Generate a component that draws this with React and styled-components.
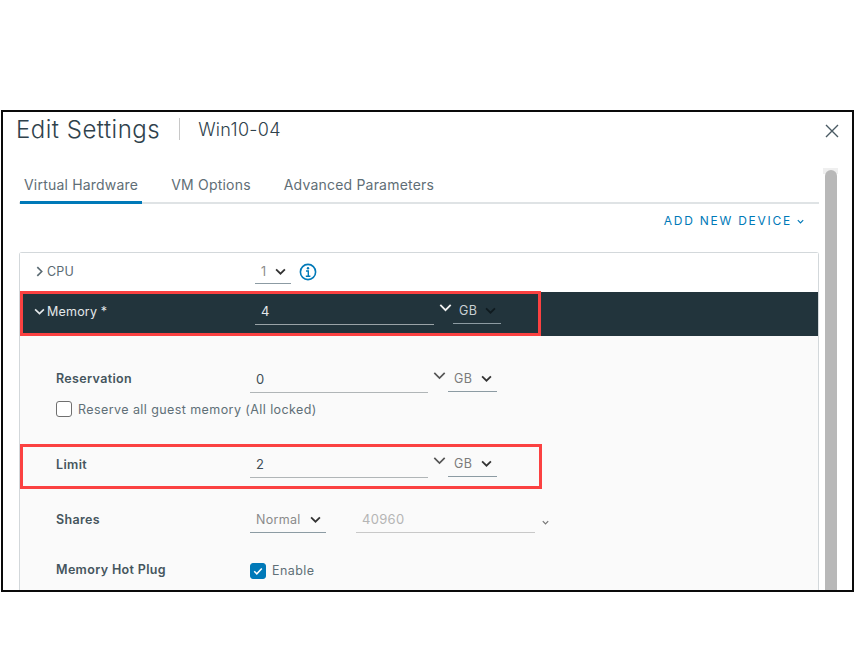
import React from "react";
import styled, { createGlobalStyle } from "styled-components";

const Global = createGlobalStyle`
  html, body { margin: 0; padding: 0; background: #fff; }
  body { font-family: Inter, "Liberation Sans", sans-serif; color: #565656; }
`;

const Page = styled.div`
  width: 854px;
  height: 666px;
  padding: 110px 0 0 1px;
  box-sizing: border-box;
`;
const Dialog = styled.div`
  width: 853px;
  height: 482px;
  box-sizing: border-box;
  border: 2px solid #0a0a0a;
  background: #fff;
  overflow: hidden;
  display: flex;
  flex-direction: column;
  position: relative;
`;
const Header = styled.header`
  height: 56px;
  flex: none;
  display: flex;
  align-items: flex-start;
  padding: 4px 12px 0 13px;
  box-sizing: border-box;
`;
const Title = styled.h1`
  margin: 0;
  font-size: 24px;
  line-height: 28px;
  font-weight: 300;
  color: #2f424c;
  letter-spacing: 0.5px;
`;
const Divider = styled.span`
  width: 1px;
  height: 22px;
  background: #c8c8c8;
  margin: 2px 18px 0 19px;
`;
const SubTitle = styled.div`
  font-size: 18px;
  line-height: 28px;
  font-weight: 300;
  color: #2f424c;
  letter-spacing: 0.3px;
  flex: 1;
`;
const Close = styled.svg`
  width: 14px;
  height: 14px;
  margin-top: 8px;
  margin-right: 1px;
  stroke: #4a5a63;
  stroke-width: 1.4;
  fill: none;
`;
const Main = styled.div`
  flex: 1;
  display: flex;
  min-height: 0;
`;
const Content = styled.div`
  width: 800px;
  margin-left: 16px;
  display: flex;
  flex-direction: column;
`;
const Tabs = styled.nav`
  height: 36px;
  flex: none;
  box-sizing: border-box;
  display: flex;
  border-bottom: 2px solid #dfe3e5;
  padding-left: 1px;
`;
const Tab = styled.div`
  padding: 7px 4px 0 4px;
  margin-right: 25px;
  margin-bottom: -2px;
  font-size: 14px;
  font-weight: 400;
  letter-spacing: 0.2px;
  line-height: 20px;
  color: #5f6e76;
  border-bottom: 3px solid ${(p) => (p.$active ? "#0079b8" : "transparent")};
  box-sizing: border-box;
  height: 36px;
`;
const Actions = styled.div`
  height: 48px;
  flex: none;
  display: flex;
  justify-content: flex-end;
  align-items: flex-start;
  padding: 10px 14px 0 0;
  box-sizing: border-box;
`;
const AddButton = styled.div`
  display: flex;
  align-items: center;
  gap: 4px;
  font-size: 12px;
  line-height: 14px;
  font-weight: 400;
  letter-spacing: 1.75px;
  color: #0079b8;
`;
const Card = styled.section`
  flex: 1;
  border: 1px solid #d3d8db;
  border-bottom: 0;
  border-radius: 3px 3px 0 0;
  display: flex;
  flex-direction: column;
  position: relative;
  background: #fafafa;
`;
const HeadRow = styled.div`
  flex: none;
  display: grid;
  grid-template-columns: 235px auto 1fr;
  align-items: center;
  box-sizing: border-box;
  height: ${(p) => p.$h}px;
  padding-bottom: ${(p) => p.$pb || 0}px;
  background: ${(p) => (p.$dark ? "#22343c" : "#fff")};
  color: ${(p) => (p.$dark ? "#e4e8ea" : "#5a6a72")};
`;
const RowTitle = styled.div`
  display: flex;
  align-items: center;
  padding-left: 14px;
  gap: 2px;
  font-size: 12.5px;
  letter-spacing: 0.2px;
  line-height: 16px;
`;
const Chevron = styled.svg`
  width: ${(p) => p.$s || 10}px;
  height: ${(p) => p.$s || 10}px;
  flex: none;
  fill: none;
  stroke: ${(p) => p.$c || "#4a5a63"};
  stroke-width: ${(p) => p.$w || 1.5};
`;
const Line = ({ s, c, w, right, small }) => (
  <Chevron $s={s} $c={c} $w={w} viewBox="0 0 10 10">
    <path d={right ? "M3 1l4 4-4 4" : small ? "M2 3.5l3 3 3-3" : "M1 3l4 4 4-4"} />
  </Chevron>
);
const InlineControls = styled.div`
  display: flex;
  align-items: center;
  gap: 8px;
`;
const Select = styled.div`
  display: flex;
  align-items: center;
  justify-content: space-between;
  box-sizing: border-box;
  width: ${(p) => p.$w}px;
  height: ${(p) => p.$h || 26}px;
  padding: 0 5px 0 ${(p) => p.$pl || 6}px;
  border-bottom: 1px solid ${(p) => p.$line || "#8c9ba3"};
  font-size: 12.5px;
  letter-spacing: 0.3px;
  color: ${(p) => p.$color || "#7b7b7b"};
  margin-bottom: ${(p) => p.$mb || 0}px;
`;
const Input = styled.div`
  display: flex;
  align-items: center;
  box-sizing: border-box;
  width: ${(p) => p.$w}px;
  height: 26px;
  padding-left: 6px;
  margin-left: ${(p) => p.$ml || 0}px;
  border-bottom: 1px solid ${(p) => p.$line || "#b0b5b7"};
  font-size: 13px;
  letter-spacing: 0.3px;
  color: ${(p) => p.$color || "#3f4f57"};
`;
const Spin = styled.div`
  width: ${(p) => p.$w || 20}px;
  height: 26px;
  display: flex;
  justify-content: flex-start;
  padding: ${(p) => p.$pt ?? 2}px 0 0 ${(p) => p.$pl ?? 5}px;
  box-sizing: border-box;
`;
const FieldGroup = styled.div`
  display: flex;
  align-items: flex-end;
`;
const Panel = styled.div`
  flex: 1;
  padding: 30px 0 0 36px;
  position: relative;
`;
const FormRow = styled.div`
  display: grid;
  grid-template-columns: 194px 1fr;
  align-items: center;
  min-height: ${(p) => p.$h || 27}px;
  margin-top: ${(p) => p.$mt || 0}px;
`;
const Label = styled.div`
  font-size: 12.5px;
  font-weight: 600;
  letter-spacing: 0.35px;
  color: #45555d;
  padding-bottom: ${(p) => p.$pb || 0}px;
`;
const CheckLine = styled.div`
  display: flex;
  align-items: center;
  gap: 6px;
  height: 16px;
  margin-top: ${(p) => p.$mt || 0}px;
  font-size: 12.5px;
  letter-spacing: 0.42px;
  color: #5f6f77;
`;
const Box = styled.span`
  width: 16px;
  height: 16px;
  box-sizing: border-box;
  border-radius: 3px;
  flex: none;
  border: 1px solid ${(p) => (p.$on ? "#0079b8" : "#6f6f6f")};
  background: ${(p) => (p.$on ? "#0079b8" : "#fff")};
  display: flex;
  align-items: center;
  justify-content: center;
`;
const Highlight = styled.div`
  position: absolute;
  box-sizing: border-box;
  border: 3.5px solid #fb4141;
  pointer-events: none;
`;
const Scrollbar = styled.aside`
  width: 15px;
  margin-left: 4px;
  background: linear-gradient(#efefef 6px, #fff 6px);
  padding: 2px 1px 0 2px;
  box-sizing: border-box;
`;
const Thumb = styled.div`
  height: 100%;
  background: #b8b8b8;
  border-radius: 6px 6px 0 0;
`;

const UnitSelect = ({ dark }) => (
  <Select $w={dark ? 48 : 49} $h={25} $mb={1} $pl={6} $color={dark ? "#c9d0d3" : "#7b7b7b"} $line={dark ? "#8d9ba2" : "#8c9ba3"}>
    GB
    <Line s={11} c={dark ? "#0f1a1f" : "#333"} w={1.6} />
  </Select>
);

export default function App() {
  return (
    <Page>
      <Global />
      <Dialog>
        <Header>
          <Title>Edit Settings</Title>
          <Divider />
          <SubTitle>Win10-04</SubTitle>
          <Close viewBox="0 0 14 14">
            <path d="M1 1l12 12M13 1L1 13" />
          </Close>
        </Header>
        <Main>
          <Content>
            <Tabs>
              <Tab $active>Virtual Hardware</Tab>
              <Tab>VM Options</Tab>
              <Tab>Advanced Parameters</Tab>
            </Tabs>
            <Actions>
              <AddButton>
                ADD NEW DEVICE
                <Line s={9} c="#0079b8" w={1.3} small />
              </AddButton>
            </Actions>
            <Card>
              <HeadRow $h={39} $pb={2}>
                <RowTitle>
                  <Line s={11} c="#5a6a72" right />
                  CPU
                </RowTitle>
                <InlineControls>
                  <Select $w={36} $h={24} $pl={6} $color="#8a8a8a" $line="#8c9ba3">
                    1
                    <Line s={11} c="#333" w={1.6} />
                  </Select>
                  <svg width="18" height="18" viewBox="0 0 18 18" fill="none">
                    <circle cx="9" cy="9" r="7.6" stroke="#0079b8" strokeWidth="1.6" />
                    <circle cx="9" cy="5.2" r="1.2" fill="#0079b8" />
                    <path d="M7 8h2.3v5M6.8 13.2h4.6" stroke="#0079b8" strokeWidth="1.4" />
                  </svg>
                </InlineControls>
                <span />
              </HeadRow>
              <HeadRow $h={44} $pb={5} $dark>
                <RowTitle>
                  <Line s={11} c="#e4e8ea" />
                  Memory *
                </RowTitle>
                <FieldGroup>
                  <Input $w={179} $color="#e4e8ea" $line="#9aa3a7">4</Input>
                  <Spin $w={19} $pt={2} $pl={5}>
                    <Line s={13} c="#f2f2f2" w={1.4} />
                  </Spin>
                  <UnitSelect dark />
                </FieldGroup>
                <span />
              </HeadRow>
              <Panel>
                <FormRow>
                  <Label $pb={3}>Reservation</Label>
                  <FieldGroup>
                    <Input $w={178}>0</Input>
                    <Spin>
                      <Line s={13} c="#555" w={1.3} />
                    </Spin>
                    <UnitSelect />
                  </FieldGroup>
                </FormRow>
                <CheckLine $mt={8}>
                  <Box />
                  Reserve all guest memory (All locked)
                </CheckLine>
                <FormRow $mt={34}>
                  <Label $pb={1}>Limit</Label>
                  <FieldGroup>
                    <Input $w={178}>2</Input>
                    <Spin>
                      <Line s={13} c="#555" w={1.3} />
                    </Spin>
                    <UnitSelect />
                  </FieldGroup>
                </FormRow>
                <FormRow $mt={28}>
                  <Label $pb={1}>Shares</Label>
                  <FieldGroup>
                    <Select $w={76} $h={26} $color="#8a8a8a">
                      Normal
                      <Line s={11} c="#333" w={1.6} />
                    </Select>
                    <Input $w={179} $ml={30} $color="#b5b5b5" $line="#c8c8c8">40960</Input>
                    <Spin $pt={11} $pl={6}>
                      <Line s={9} c="#777" w={1.4} small />
                    </Spin>
                  </FieldGroup>
                </FormRow>
                <FormRow $mt={29} $h={16}>
                  <Label $pb={2}>Memory Hot Plug</Label>
                  <CheckLine>
                    <Box $on>
                      <svg width="12" height="12" viewBox="0 0 12 12" fill="none">
                        <path d="M2.2 6.2l2.6 2.6 5-5.4" stroke="#fff" strokeWidth="1.5" />
                      </svg>
                    </Box>
                    Enable
                  </CheckLine>
                </FormRow>
              </Panel>
              <Highlight style={{ left: 0, top: 38, width: 521, height: 45 }} />
              <Highlight style={{ left: 0, top: 191, width: 522, height: 45 }} />
            </Card>
          </Content>
          <Scrollbar>
            <Thumb />
          </Scrollbar>
        </Main>
      </Dialog>
    </Page>
  );
}
